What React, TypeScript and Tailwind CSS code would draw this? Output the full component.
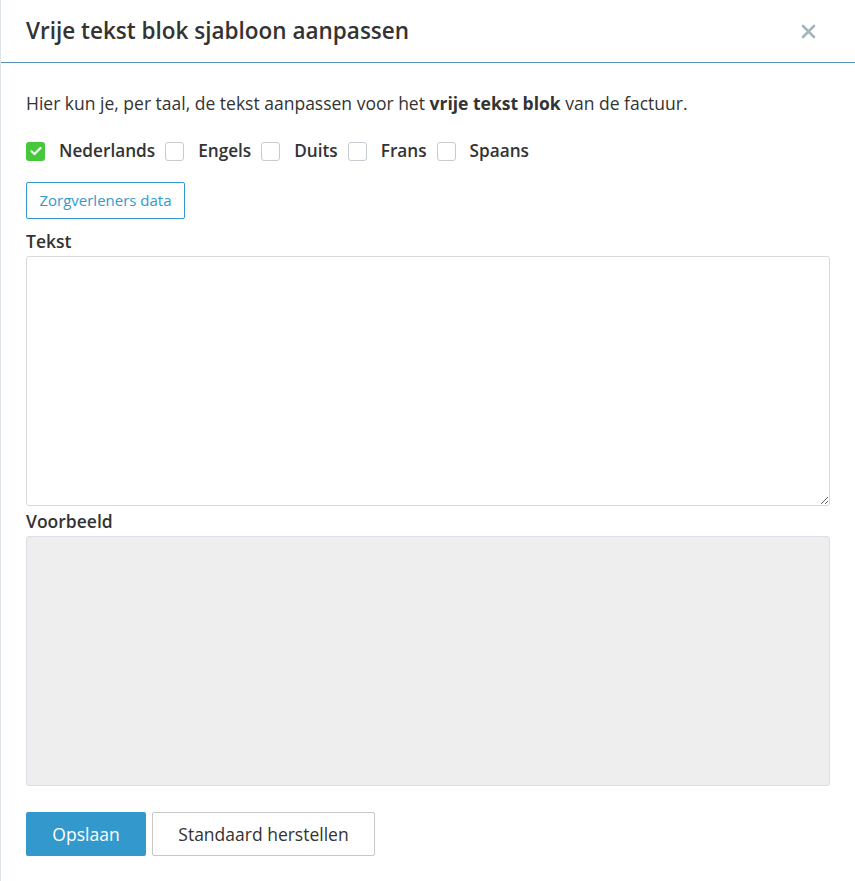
import { useState } from "react";

const talen = ["Nederlands", "Engels", "Duits", "Frans", "Spaans"];

function Checkbox({ checked, onClick }: { checked: boolean; onClick: () => void }) {
  return (
    <button
      type="button"
      onClick={onClick}
      className={
        checked
          ? "flex h-[19px] w-[19px] items-center justify-center rounded-[3px] bg-[#45c93a]"
          : "h-[19px] w-[19px] rounded-[3px] border border-[#c5cbd1] bg-white"
      }
    >
      {checked && (
        <svg width="12" height="10" viewBox="0 0 12 10" fill="none">
          <path d="M1.5 5.2 4.5 8 10.5 2" stroke="white" strokeWidth="2.2" strokeLinecap="round" strokeLinejoin="round" />
        </svg>
      )}
    </button>
  );
}

export default function App() {
  const [actief, setActief] = useState<string[]>(["Nederlands"]);

  const toggle = (taal: string) =>
    setActief((a) => (a.includes(taal) ? a.filter((t) => t !== taal) : [...a, taal]));

  return (
    <div className="min-h-[881px] border-l border-[#dfe4ea] bg-white font-['Open_Sans',sans-serif] text-[#333]">
      <header className="flex h-[63px] items-center justify-between border-b border-[#5a93b8] pl-[25px] pr-[39px]">
        <h1 className="text-[22.5px] font-semibold text-[#333]">Vrije tekst blok sjabloon aanpassen</h1>
        <button type="button" className="text-[#a3b6c0]">
          <svg width="15" height="15" viewBox="0 0 15 15">
            <path d="M2 2 13 13M13 2 2 13" stroke="currentColor" strokeWidth="2.6" strokeLinecap="round" />
          </svg>
        </button>
      </header>

      <div className="px-[25px] pt-[29px]">
        <p className="text-[17.5px] leading-[22px]">
          Hier kun je, per taal, de tekst aanpassen voor het <b className="font-bold">vrije tekst blok</b> van de factuur.
        </p>

        <div className="mt-[25px] flex h-[24px] items-center">
          {talen.map((taal) => (
            <label key={taal} className="mr-[10px] flex items-center gap-[14px]">
              <Checkbox checked={actief.includes(taal)} onClick={() => toggle(taal)} />
              <span className="text-[17.2px] font-semibold text-[#333]">{taal}</span>
            </label>
          ))}
        </div>

        <button
          type="button"
          className="mt-[19px] h-[37px] w-[159px] rounded-[2px] border border-[#3399cc] text-[15px] text-[#3399cc]"
        >
          Zorgverleners data
        </button>

        <div className="mt-[11px] text-[17.5px] font-semibold leading-[22px]">Tekst</div>
        <textarea className="mt-[4px] block h-[250px] w-full rounded-[3px] border border-[#dadada] p-2 text-[15px] outline-none" />

        <div className="mt-[4px] text-[17.5px] font-semibold leading-[22px]">Voorbeeld</div>
        <div className="mt-[4px] h-[250px] w-full rounded-[3px] border border-[#dcdfe8] bg-[#eeeeee]" />

        <div className="mt-[26px] flex gap-[6px]">
          <button type="button" className="h-[44px] w-[120px] rounded-[2px] bg-[#3399cc] text-[17.5px] text-white">
            Opslaan
          </button>
          <button
            type="button"
            className="h-[44px] w-[223px] rounded-[2px] border border-[#c8c8c8] bg-white text-[17.5px] text-[#333]"
          >
            Standaard herstellen
          </button>
        </div>
      </div>
    </div>
  );
}
